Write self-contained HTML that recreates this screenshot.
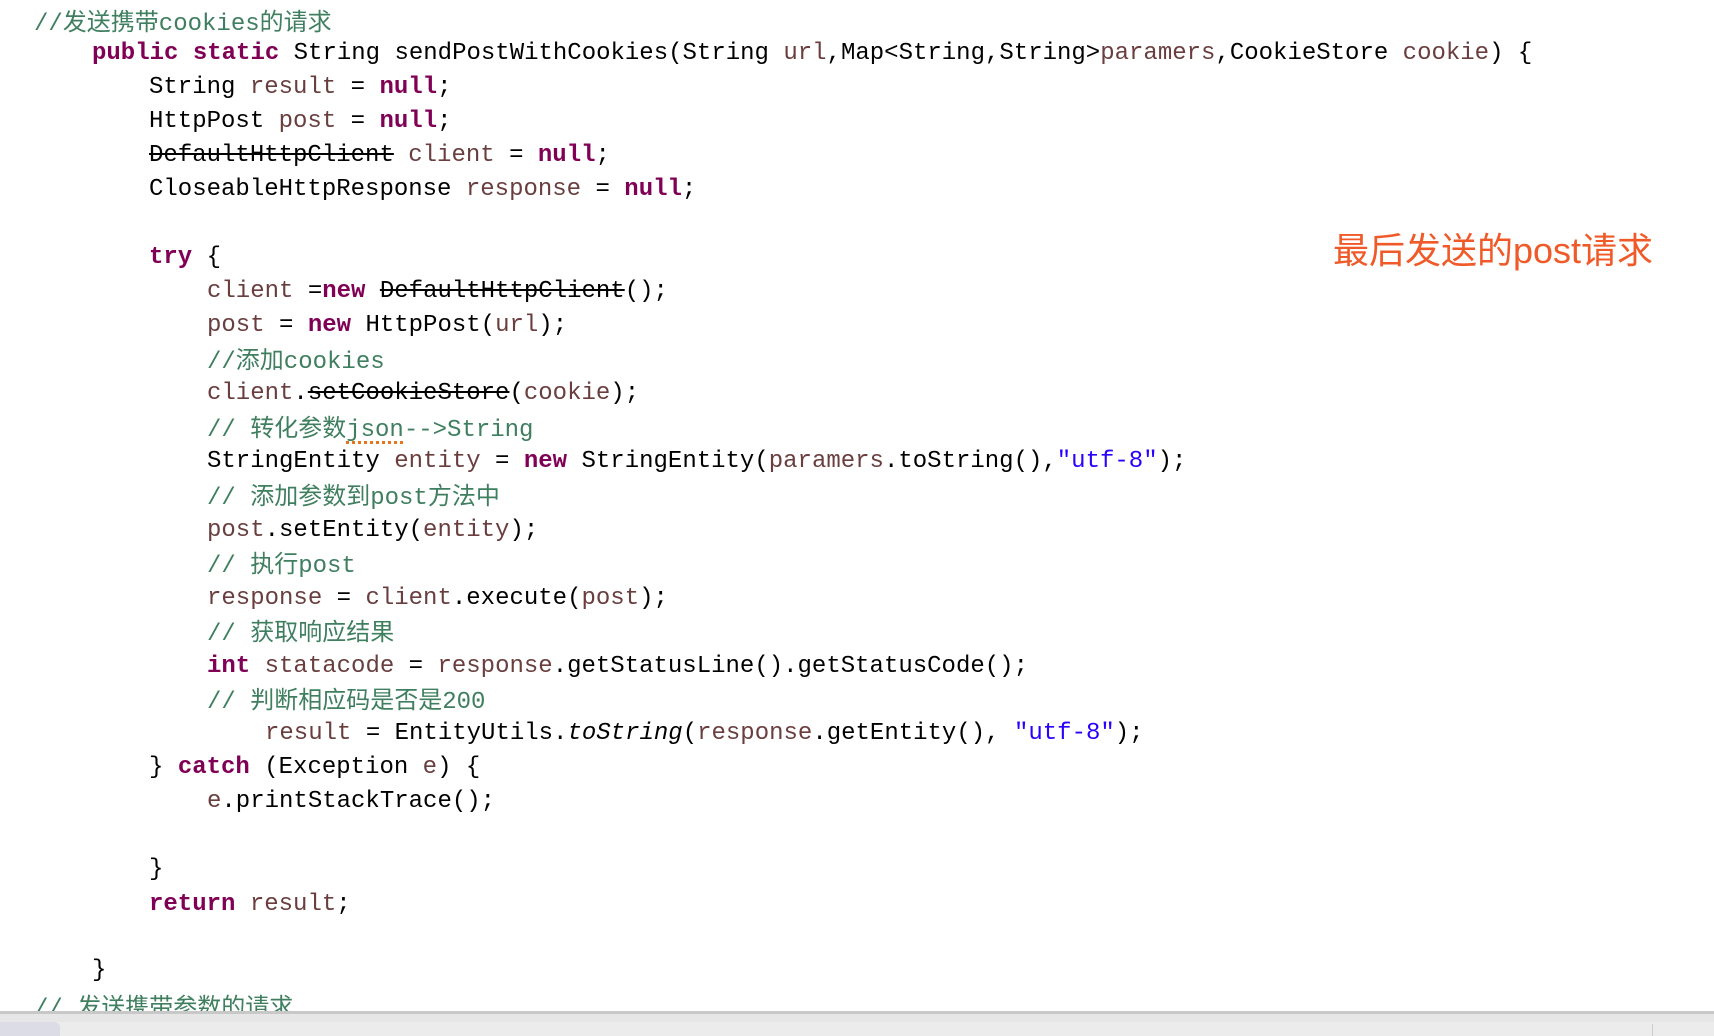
<!DOCTYPE html>
<html><head><meta charset="utf-8"><style>
html,body{margin:0;padding:0;background:#fff;width:1714px;height:1036px;overflow:hidden;position:relative}
.l{position:absolute;height:34px;line-height:34px;font-family:"Liberation Mono","Noto Sans CJK SC",monospace;font-size:24px;color:#000;white-space:pre}
.k{color:#7f0055;font-weight:bold}
.v{color:#6a3e3e}
.c{color:#3f7f5f}
.s{color:#2a00ff}
.st{text-decoration:line-through}
.i{font-style:italic}
.sq{text-decoration:underline dotted #e8741c;text-underline-offset:5px;text-decoration-thickness:3px}
.bar{position:absolute;left:0;width:1714px;z-index:2}
</style></head><body>
<div class="l c" style="left:34px;top:8px">//发送携带cookies的请求</div>
<div class="l" style="left:92px;top:37px"><span class="k">public</span> <span class="k">static</span> String sendPostWithCookies(String <span class="v">url</span>,Map&lt;String,String&gt;<span class="v">paramers</span>,CookieStore <span class="v">cookie</span>) {</div>
<div class="l" style="left:149px;top:71px">String <span class="v">result</span> = <span class="k">null</span>;</div>
<div class="l" style="left:149px;top:105px">HttpPost <span class="v">post</span> = <span class="k">null</span>;</div>
<div class="l" style="left:149px;top:139px"><span class="st">DefaultHttpClient</span> <span class="v">client</span> = <span class="k">null</span>;</div>
<div class="l" style="left:149px;top:173px">CloseableHttpResponse <span class="v">response</span> = <span class="k">null</span>;</div>
<div class="l" style="left:149px;top:241px"><span class="k">try</span> {</div>
<div class="l" style="left:207px;top:275px"><span class="v">client</span> =<span class="k">new</span> <span class="st">DefaultHttpClient</span>();</div>
<div class="l" style="left:207px;top:309px"><span class="v">post</span> = <span class="k">new</span> HttpPost(<span class="v">url</span>);</div>
<div class="l c" style="left:207px;top:346px">//添加cookies</div>
<div class="l" style="left:207px;top:377px"><span class="v">client</span>.<span class="st">setCookieStore</span>(<span class="v">cookie</span>);</div>
<div class="l c" style="left:207px;top:414px">// 转化参数<span class="sq">json</span>--&gt;String</div>
<div class="l" style="left:207px;top:445px">StringEntity <span class="v">entity</span> = <span class="k">new</span> StringEntity(<span class="v">paramers</span>.toString(),<span class="s">"utf-8"</span>);</div>
<div class="l c" style="left:207px;top:482px">// 添加参数到post方法中</div>
<div class="l" style="left:207px;top:514px"><span class="v">post</span>.setEntity(<span class="v">entity</span>);</div>
<div class="l c" style="left:207px;top:550px">// 执行post</div>
<div class="l" style="left:207px;top:582px"><span class="v">response</span> = <span class="v">client</span>.execute(<span class="v">post</span>);</div>
<div class="l c" style="left:207px;top:618px">// 获取响应结果</div>
<div class="l" style="left:207px;top:650px"><span class="k">int</span> <span class="v">statacode</span> = <span class="v">response</span>.getStatusLine().getStatusCode();</div>
<div class="l c" style="left:207px;top:686px">// 判断相应码是否是200</div>
<div class="l" style="left:265px;top:717px"><span class="v">result</span> = EntityUtils.<span class="i">toString</span>(<span class="v">response</span>.getEntity(), <span class="s">"utf-8"</span>);</div>
<div class="l" style="left:149px;top:751px">} <span class="k">catch</span> (Exception <span class="v">e</span>) {</div>
<div class="l" style="left:207px;top:785px"><span class="v">e</span>.printStackTrace();</div>
<div class="l" style="left:149px;top:853px">}</div>
<div class="l" style="left:149px;top:888px"><span class="k">return</span> <span class="v">result</span>;</div>
<div class="l" style="left:92px;top:954px">}</div>
<div class="l c" style="left:34px;top:993px">// 发送携带参数的请求</div>
<div style="position:absolute;left:1333px;top:229px;font-family:'Liberation Sans','Noto Sans CJK SC',sans-serif;font-size:36px;line-height:44px;color:#f05a28;white-space:nowrap">最后发送的post请求</div>
<div class="bar" style="top:1011px;height:3px;background:#c8c8c8"></div>
<div class="bar" style="top:1014px;height:8px;background:#e6e6e6"></div>
<div class="bar" style="top:1022px;height:14px;background:#ececec"></div>
<div style="position:absolute;z-index:3;left:0;top:1022px;width:60px;height:14px;background:#dcdce6;border-radius:0 6px 0 0"></div>
<div style="position:absolute;z-index:3;left:1652px;top:1024px;width:1px;height:12px;background:#ccc"></div>
</body></html>
